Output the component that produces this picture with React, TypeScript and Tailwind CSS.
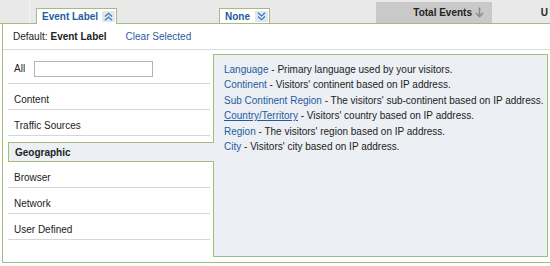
import React from 'react'

const items = [
  { name: 'Language', desc: 'Primary language used by your visitors.' },
  { name: 'Continent', desc: "Visitors' continent based on IP address." },
  { name: 'Sub Continent Region', desc: "The visitors' sub-continent based on IP address." },
  { name: 'Country/Territory', desc: "Visitors' country based on IP address.", hover: true },
  { name: 'Region', desc: "The visitors' region based on IP address." },
  { name: 'City', desc: "Visitors' city based on IP address." },
]

function ChevronsUp() {
  return (
    <svg width="9" height="9" viewBox="0 0 9 9" fill="none" stroke="#3f78b5" strokeWidth="1.2">
      <path d="M1 4.5 L4.5 1.2 L8 4.5" />
      <path d="M1 8.3 L4.5 5 L8 8.3" />
    </svg>
  )
}

function ChevronsDown() {
  return (
    <svg width="9" height="9" viewBox="0 0 9 9" fill="none" stroke="#3f78b5" strokeWidth="1.2">
      <path d="M1 0.7 L4.5 4 L8 0.7" />
      <path d="M1 4.5 L4.5 7.8 L8 4.5" />
    </svg>
  )
}

function ArrowDown() {
  return (
    <svg width="9" height="11" viewBox="0 0 9 11" fill="none" stroke="#8c8c8c" strokeWidth="1.6">
      <path d="M4.5 0.5 V9.5" />
      <path d="M1 6 L4.5 9.5 L8 6" />
    </svg>
  )
}

export default function App() {
  const font = { fontFamily: '"Liberation Sans", Arial, sans-serif' }

  return (
    <div className="w-[550px] h-[266px] bg-white overflow-hidden text-[10px] text-[#222] whitespace-nowrap" style={font}>
      {/* Table header */}
      <div className="flex items-end h-[24px] bg-[#e9e9e9] border-b border-[#a3bd7f]">
        <div className="w-[30px] self-stretch border-r border-[#f4f4f4]" />
        <div className="ml-[6px] mb-[-1px] h-[16px] w-[81px] flex items-center bg-white border border-b-0 border-[#a3bd7f] pl-[5px] pr-[1px]">
          <span className="font-bold text-[#1f5c9e]">Event Label</span>
          <span className="ml-auto w-[13px] h-[11px] flex items-center justify-center bg-[#dde8f3]">
            <ChevronsUp />
          </span>
        </div>
        <div className="ml-[102px] h-[15px] w-[51px] flex items-center bg-white border border-b-0 border-[#a3bd7f] pl-[5px] pr-[1px]">
          <span className="font-bold text-[#1f5c9e]">None</span>
          <span className="ml-auto w-[13px] h-[11px] flex items-center justify-center bg-[#dde8f3]">
            <ChevronsDown />
          </span>
        </div>
        <div className="ml-[106px] h-[21px] w-[116px] flex items-center justify-end gap-[3px] pr-[8px] bg-[#c9c9c9]">
          <span className="font-bold">Total Events</span>
          <ArrowDown />
        </div>
        <div className="h-[21px] flex-1 flex items-center justify-end pr-[2px]">
          <span className="font-bold">U</span>
        </div>
      </div>

      {/* Dimension picker */}
      <div className="ml-[2px] border-l border-b border-[#a3bd7f]">
        <div className="h-[26px] flex items-center pl-[10px] border-b border-[#dcdcdc]">
          <span>Default:</span>
          <span className="font-bold ml-[3px]">Event Label</span>
          <a className="ml-[19px] text-[#1f5c9e]">Clear Selected</a>
        </div>

        <div className="flex pl-[5px] pt-[4px] pb-[5px]">
          <div className="w-[206px] flex flex-col">
            <div className="h-[88px] border-r border-[#a3bd7f] pr-[3px]">
              <div className="h-[30px] flex items-center pl-[6px] border-b border-[#d6d6d6]">
                <span>All</span>
                <input className="ml-[9px] w-[119px] h-[16px] border border-[#b5b5b5] bg-white outline-none" />
              </div>
              <div className="h-[26px] flex items-center pl-[6px] pt-[6px] border-b border-[#d6d6d6]">Content</div>
              <div className="h-[26px] flex items-center pl-[6px] pt-[6px] border-b border-[#d6d6d6]">Traffic Sources</div>
            </div>
            <div className="h-[20px] w-[207px] flex items-center pl-[6px] bg-[#eceff4] border border-r-0 border-[#a3bd7f] font-bold">
              Geographic
            </div>
            <div className="h-[95px] border-r border-[#a3bd7f] pr-[3px]">
              <div className="h-[26px] flex items-center pl-[6px] pt-[6px] border-b border-[#d6d6d6]">Browser</div>
              <div className="h-[26px] flex items-center pl-[6px] pt-[6px] border-b border-[#d6d6d6]">Network</div>
              <div className="h-[26px] flex items-center pl-[6px] pt-[6px] border-b border-[#d6d6d6]">User Defined</div>
            </div>
          </div>

          <div className="flex-1 h-[203px] mr-[2px] bg-[#eceff4] border-t border-b border-r border-[#a3bd7f] pl-[10px] pt-[7px] leading-[15.4px]">
            {items.map((it) => (
              <div key={it.name}>
                <a className={it.hover ? 'text-[#1f5c9e] underline' : 'text-[#1f5c9e]'}>{it.name}</a>
                <span> - {it.desc}</span>
              </div>
            ))}
          </div>
        </div>
      </div>
    </div>
  )
}
